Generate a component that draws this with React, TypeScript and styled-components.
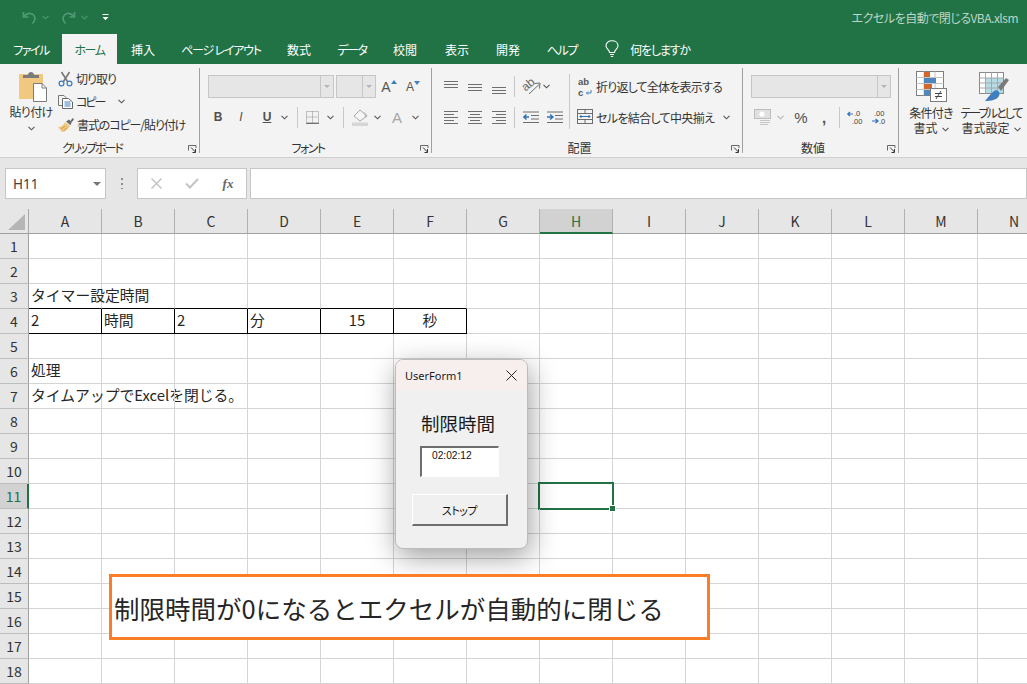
import React from "react";
import styled, { createGlobalStyle } from "styled-components";

const Global = createGlobalStyle`
  html, body { margin: 0; padding: 0; background: #fff; }
  body { font-family: "Noto Sans CJK JP", "Noto Sans", sans-serif; font-feature-settings: "palt"; }
  #root { width: 1027px; height: 684px; overflow: hidden; }
`;

const Page = styled.div`
  position: relative;
  width: 1027px;
  height: 684px;
  overflow: hidden;
  display: flex;
  flex-direction: column;
  color: #262626;
`;

/* ---------- title bar + tabs ---------- */
const TitleBar = styled.div`
  height: 34px;
  background: #217346;
  display: flex;
  align-items: center;
  padding: 0 9px 0 22px;
  flex-shrink: 0;
`;
const QuickAccess = styled.div`
  display: flex;
  align-items: center;
  flex: 1;
`;
const DocTitle = styled.div`
  font-size: 12px;
  color: #bcd6c7;
  letter-spacing: -0.5px;
`;
const TabBar = styled.div`
  height: 30px;
  background: #217346;
  display: flex;
  flex-shrink: 0;
`;
const Tab = styled.div<{ $w: number; $active?: boolean; $ls?: number }>`
  width: ${(p) => p.$w}px;
  flex-shrink: 0;
  font-size: 12px;
  letter-spacing: ${(p) => p.$ls ?? 0}px;
  display: flex;
  align-items: center;
  justify-content: center;
  white-space: nowrap;
  background: ${(p) => (p.$active ? "#f3f3f3" : "transparent")};
  color: ${(p) => (p.$active ? "#217346" : "#fff")};
`;

/* ---------- ribbon ---------- */
const Ribbon = styled.div`
  height: 93px;
  background: #f3f3f3;
  border-bottom: 1px solid #cfcfcf;
  display: flex;
  flex-shrink: 0;
  overflow: hidden;
`;
const Group = styled.div<{ $w: number; $last?: boolean }>`
  position: relative;
  width: ${(p) => p.$w}px;
  flex-shrink: 0;
  display: flex;
  flex-direction: column;
  &::after {
    content: "";
    display: ${(p) => (p.$last ? "none" : "block")};
    position: absolute;
    right: 0;
    top: 4px;
    height: 85px;
    width: 1px;
    background: #a0a0a0;
  }
`;
const GroupBody = styled.div<{ $pl?: number }>`
  flex: 1;
  padding-left: ${(p) => p.$pl ?? 0}px;
  display: flex;
`;
const GroupColumn = styled.div`
  padding-top: 11px;
  display: flex;
  flex-direction: column;
  gap: 8px;
`;
const GroupLabel = styled.div<{ $ls?: number }>`
  height: 20px;
  padding-right: 16px;
  font-size: 12px;
  line-height: 22px;
  letter-spacing: ${(p) => p.$ls ?? 0}px;
  text-align: center;
  color: #333;
`;
const Launcher = styled.svg`
  position: absolute;
  right: 3px;
  bottom: 4px;
`;
const Row = styled.div<{ $h: number; $pl?: number }>`
  height: ${(p) => p.$h}px;
  padding-left: ${(p) => p.$pl ?? 0}px;
  display: flex;
  align-items: center;
`;
const Slot = styled.div<{ $w: number; $ml?: number }>`
  width: ${(p) => p.$w}px;
  margin-left: ${(p) => p.$ml ?? 0}px;
  flex-shrink: 0;
  display: flex;
  align-items: center;
  justify-content: center;
`;
const Sep = styled.div<{ $h?: number; $mt?: number }>`
  width: 1px;
  height: ${(p) => p.$h ?? 21}px;
  margin-top: ${(p) => p.$mt ?? 0}px;
  background: #c8c8c8;
  flex-shrink: 0;
`;
const Combo = styled.div<{ $w: number }>`
  width: ${(p) => p.$w}px;
  height: 23px;
  box-sizing: border-box;
  background: #e6e6e6;
  border: 1px solid #c6c6c6;
  display: flex;
  justify-content: flex-end;
  flex-shrink: 0;
`;
const ComboArrow = styled.div`
  width: 12px;
  border-left: 1px solid #c6c6c6;
  display: flex;
  align-items: center;
  justify-content: center;
  &::before {
    content: "";
    border-left: 3px solid transparent;
    border-right: 3px solid transparent;
    border-top: 3px solid #b4b4b4;
  }
`;
const RibbonText = styled.span<{ $ml?: number; $ls?: number }>`
  font-size: 12px;
  white-space: nowrap;
  margin-left: ${(p) => p.$ml ?? 0}px;
  letter-spacing: ${(p) => p.$ls ?? 0}px;
  color: #333;
`;
const FontButton = styled.span<{ $b?: boolean; $i?: boolean; $u?: boolean; $muted?: boolean; $size?: number }>`
  font-family: "Liberation Sans", sans-serif;
  font-size: ${(p) => p.$size ?? 12}px;
  line-height: 1;
  font-weight: ${(p) => (p.$b || p.$u ? 700 : 400)};
  font-style: ${(p) => (p.$i ? "italic" : "normal")};
  text-decoration: ${(p) => (p.$u ? "underline" : "none")};
  color: ${(p) => (p.$muted ? "#a6a6a6" : "#505050")};
`;
const PasteButton = styled.div`
  width: 42px;
  margin-left: 10px;
  flex-shrink: 0;
  padding-top: 7px;
  display: flex;
  flex-direction: column;
  align-items: center;
`;
const PasteText = styled.div`
  font-size: 12px;
  line-height: 14px;
  margin-top: 3px;
  letter-spacing: -0.7px;
  white-space: nowrap;
  color: #333;
`;
const PasteChevron = styled.div`
  margin-top: 5px;
  line-height: 0;
`;
const ClipColumn = styled.div`
  margin-left: 6px;
  padding-top: 3px;
  display: flex;
  flex-direction: column;
`;
const ClipRow = styled.div`
  height: 23px;
  display: flex;
  align-items: center;
`;
const BigButton = styled.div<{ $w: number; $ml?: number }>`
  width: ${(p) => p.$w}px;
  margin-left: ${(p) => p.$ml ?? 0}px;
  flex-shrink: 0;
  padding-top: 7px;
  display: flex;
  flex-direction: column;
  align-items: center;
`;
const BigText = styled.div<{ $ls?: number }>`
  font-size: 12px;
  line-height: 15px;
  height: 15px;
  letter-spacing: ${(p) => p.$ls ?? 0}px;
  text-align: center;
  white-space: nowrap;
  color: #333;
  &:first-of-type { margin-top: 3px; }
  svg { margin-left: 4px; vertical-align: 1px; }
`;

/* ---------- formula bar ---------- */
const FormulaBar = styled.div`
  height: 51px;
  background: #e6e6e6;
  padding: 10px 0 0 5px;
  box-sizing: border-box;
  display: flex;
  flex-shrink: 0;
`;
const BarBox = styled.div<{ $w?: number; $ml: number }>`
  ${(p) => (p.$w ? `width:${p.$w}px; flex-shrink:0;` : "flex:1;")}
  margin-left: ${(p) => p.$ml}px;
  height: 31px;
  box-sizing: border-box;
  background: #fff;
  border: 1px solid #c6c6c6;
  display: flex;
  align-items: center;
`;
const NameText = styled.div`
  font-size: 13.5px;
  color: #404040;
  margin-left: 7px;
  flex: 1;
  font-family: "Noto Sans", sans-serif;
`;
const NameArrow = styled.div`
  margin-right: 4px;
  border-left: 4px solid transparent;
  border-right: 4px solid transparent;
  border-top: 4px solid #777;
`;
const Grip = styled.div`
  width: 2px;
  height: 11px;
  margin: 10px 0 0 15px;
  background: repeating-linear-gradient(#8e8e8e 0 2px, transparent 2px 5px);
  flex-shrink: 0;
`;
const FxText = styled.span`
  font-family: "Liberation Serif", serif;
  font-style: italic;
  font-weight: 700;
  font-size: 13px;
  color: #666;
`;

/* ---------- sheet ---------- */
const Sheet = styled.div`
  display: grid;
  grid-template-columns: 29px repeat(14, 73px);
  grid-auto-rows: 25px;
  background: #fff;
`;
const Corner = styled.div`
  background: #e6e6e6;
  border-right: 1px solid #a8a8a8;
  border-bottom: 1px solid #a0a0a0;
  box-sizing: border-box;
  display: flex;
  align-items: flex-end;
  justify-content: flex-end;
  padding: 0 3px 3px 0;
`;
const ColHead = styled.div<{ $active?: boolean }>`
  box-sizing: border-box;
  background: ${(p) => (p.$active ? "#d2d2d2" : "#e6e6e6")};
  border-right: 1px solid #b0b0b0;
  border-bottom: ${(p) => (p.$active ? "2px solid #217346" : "1px solid #a0a0a0")};
  color: ${(p) => (p.$active ? "#217346" : "#333")};
  font-size: 14px;
  display: flex;
  align-items: center;
  justify-content: center;
`;
const RowHead = styled.div<{ $active?: boolean }>`
  box-sizing: border-box;
  background: ${(p) => (p.$active ? "#d2d2d2" : "#e6e6e6")};
  border-right: ${(p) => (p.$active ? "2px solid #217346" : "1px solid #a0a0a0")};
  border-bottom: 1px solid #bdbdbd;
  color: ${(p) => (p.$active ? "#217346" : "#333")};
  font-size: 14px;
  display: flex;
  align-items: center;
  justify-content: center;
`;
const Cell = styled.div<{ $black?: "bottom" | "both"; $center?: boolean; $selected?: boolean }>`
  position: relative;
  box-sizing: border-box;
  border-right: 1px solid ${(p) => (p.$black === "both" ? "#000" : "#d4d4d4")};
  border-bottom: 1px solid ${(p) => (p.$black ? "#000" : "#d4d4d4")};
  padding: 0 2px;
  font-size: 14.8px;
  line-height: 22px;
  color: #262626;
  white-space: nowrap;
  font-feature-settings: normal;
  text-align: ${(p) => (p.$center ? "center" : "left")};
  ${(p) =>
    p.$selected
      ? `&::after { content: ""; position: absolute; left: -2px; top: -2px; right: -2px; bottom: -2px; border: 2px solid #217346; }
         &::before { content: ""; position: absolute; right: -3px; bottom: -3px; width: 5px; height: 5px; background: #217346; border: 1px solid #fff; z-index: 1; box-sizing: content-box; margin: -1px; }`
      : ""}
`;

/* ---------- dialog ---------- */
const Dialog = styled.div`
  position: absolute;
  left: 395px;
  top: 359px;
  width: 133px;
  height: 190px;
  box-sizing: border-box;
  background: #f0f0f0;
  border: 1px solid #bcbcbc;
  border-radius: 8px;
  box-shadow: 2px 8px 28px rgba(0, 0, 0, 0.38);
  overflow: hidden;
  display: flex;
  flex-direction: column;
`;
const DialogTitle = styled.div`
  height: 30px;
  background: #f7efee;
  display: flex;
  align-items: center;
  justify-content: space-between;
  padding: 0 10px 0 9px;
  font-family: "Noto Sans", sans-serif;
  font-size: 11px;
  color: #1a1a1a;
`;
const DialogBody = styled.div`
  display: flex;
  flex-direction: column;
  padding: 20px 0 0 16px;
`;
const DialogHeading = styled.div`
  margin-left: 9px;
  font-size: 18.5px;
  line-height: 26px;
  font-weight: 400;
  color: #1a1a1a;
  font-feature-settings: normal;
  white-space: nowrap;
`;
const TimerBox = styled.div`
  margin: 10px 0 0 8px;
  width: 79px;
  height: 31px;
  box-sizing: border-box;
  background: #fff;
  border: 1px solid;
  border-width: 2px 1px 1px 2px;
  border-color: #6e6e6e #fff #fff #6e6e6e;
  padding: 1px 0 0 10px;
  font-family: "Liberation Sans", sans-serif;
  font-size: 10.2px;
  line-height: 13px;
  color: #111;
`;
const StopButton = styled.div`
  margin-top: 17px;
  width: 96px;
  height: 32px;
  box-sizing: border-box;
  background: #f0f0f0;
  border: 1px solid;
  border-width: 1px 2px 2px 1px;
  border-color: #fff #6e6e6e #6e6e6e #fff;
  font-size: 11px;
  letter-spacing: -0.5px;
  display: flex;
  align-items: center;
  justify-content: center;
  color: #111;
`;

/* ---------- callout ---------- */
const Callout = styled.div`
  position: absolute;
  left: 109px;
  top: 574px;
  width: 601px;
  height: 66px;
  box-sizing: border-box;
  background: #fff;
  border: 3px solid #fb7d26;
  padding-left: 2px;
  display: flex;
  align-items: center;
  font-size: 25.5px;
  font-feature-settings: normal;
  color: #262626;
  white-space: nowrap;
`;

/* ---------- icons ---------- */
const Chevron = ({ color = "#555" }: { color?: string }) => (
  <svg width="7" height="5" viewBox="0 0 7 5">
    <path d="M0.5 0.8 L3.5 3.8 L6.5 0.8" fill="none" stroke={color} strokeWidth="1.1" />
  </svg>
);
const Lines = ({ rows, w = 16, h = 16, color = "#6e6e6e" }: { rows: number[][]; w?: number; h?: number; color?: string }) => (
  <svg width={w} height={h} viewBox={`0 0 ${w} ${h}`}>
    {rows.map((r, i) => (
      <rect key={i} x={r[0]} y={r[2]} width={r[1] - r[0]} height="1" fill={color} />
    ))}
  </svg>
);
const LauncherIcon = () => (
  <Launcher width="9" height="8" viewBox="0 0 9 8">
    <path d="M0.5 5.5 V0.5 H8 V3" fill="none" stroke="#666" />
    <path d="M3 2.5 L7.5 7 M7.5 4 V7.5 H4.5" fill="none" stroke="#333" />
  </Launcher>
);
const Undo = () => (
  <svg width="15" height="15" viewBox="0 0 15 15" fill="none" stroke="#4f9a74" strokeWidth="1.7">
    <path d="M1.5 2 V7 H6.5" />
    <path d="M1.8 6.8 C4 3.2 8.8 2.4 11.5 5 C14 7.6 13 11 10.3 13.5" />
  </svg>
);
const Redo = () => (
  <svg width="15" height="15" viewBox="0 0 15 15" fill="none" stroke="#4f9a74" strokeWidth="1.7">
    <path d="M13.5 2 V7 H8.5" />
    <path d="M13.2 6.8 C11 3.2 6.2 2.4 3.5 5 C1 7.6 2 11 4.7 13.5" />
  </svg>
);
const QatMenu = () => (
  <svg width="7" height="7" viewBox="0 0 7 7" fill="#fff">
    <rect x="0.5" y="0" width="6" height="1" />
    <path d="M0.5 3 H6.5 L3.5 6.2 Z" />
  </svg>
);
const Bulb = () => (
  <svg width="14" height="18" viewBox="0 0 14 18" fill="none" stroke="#fff" strokeWidth="1.1">
    <path d="M4.5 12.5 C4.5 10 1 8.8 1 5.8 C1 2.8 3.6 0.8 7 0.8 C10.4 0.8 13 2.8 13 5.8 C13 8.8 9.5 10 9.5 12.5 Z" />
    <path d="M5 14.5 H9 M5.8 16.5 H8.2" />
  </svg>
);
const PasteIcon = () => (
  <svg width="30" height="31" viewBox="0 0 30 31">
    <rect x="1" y="3" width="24" height="25" rx="1" fill="#f1c87f" />
    <path d="M5 7 V4 H10 C10 2 11.5 1 13 1 C14.5 1 16 2 16 4 H21 V7 Z" fill="#7b7b7b" />
    <path d="M15.5 12.5 H24 L28.5 17 V30.5 H15.5 Z" fill="#fff" stroke="#7b7b7b" />
    <path d="M24 12.5 V17 H28.5" fill="none" stroke="#7b7b7b" />
  </svg>
);
const CutIcon = () => (
  <svg width="15" height="16" viewBox="0 0 15 16" fill="none">
    <path d="M3.5 1 L9.5 10.5 M11.5 1 L5.5 10.5" stroke="#777" strokeWidth="1.6" />
    <circle cx="3.5" cy="12.5" r="2.4" stroke="#3f7fc0" strokeWidth="1.3" />
    <circle cx="11.5" cy="12.5" r="2.4" stroke="#3f7fc0" strokeWidth="1.3" />
  </svg>
);
const CopyIcon = () => (
  <svg width="15" height="14" viewBox="0 0 15 14" fill="none">
    <path d="M4 10.5 H0.5 V0.5 H6 L8 2.5 V3.5" stroke="#777" />
    <path d="M4.5 3.5 H10.5 L14.5 7 V13.5 H4.5 Z" fill="#fff" stroke="#666" />
    <path d="M6.5 7 H12.5 M6.5 9 H12.5 M6.5 11 H12.5" stroke="#3f7fc0" />
  </svg>
);
const PainterIcon = () => (
  <svg width="16" height="14" viewBox="0 0 16 14">
    <path d="M0 9 C3 9 6 7 7 4 L12 8 C10 11 7 14 4 14 Z" fill="#f1c87f" />
    <path d="M3 11 L7 8 M5.5 13 L9 9.5" stroke="#c9a050" />
    <path d="M8 3.5 L11 1.5 L12.5 3 L14.5 0 L16 1.5 L13.5 4.5 L12.5 7.2 Z" fill="#6b6b6b" />
  </svg>
);
const BorderIcon = () => (
  <svg width="13" height="13" viewBox="0 0 13 13" fill="none" stroke="#8d8d8d" strokeDasharray="1 1">
    <rect x="0.5" y="0.5" width="12" height="11" />
    <path d="M6.5 0.5 V11.5 M0.5 6 H12.5" />
    <path d="M0 12.5 H13" strokeDasharray="none" stroke="#707070" />
  </svg>
);
const FillIcon = () => (
  <svg width="17" height="17" viewBox="0 0 17 17">
    <path d="M8 1 L15 7 L8 12 L2 7 Z" fill="#f6f6f6" stroke="#a9a9a9" />
    <path d="M12 2.5 L15.5 7 L13 9 Z" fill="#b8b8b8" />
    <rect x="0" y="13.5" width="16" height="3.5" fill="#d6d6d6" />
  </svg>
);
const OrientIcon = () => (
  <svg width="18" height="18" viewBox="0 0 18 18" fill="none" overflow="visible">
    <text x="0" y="11" transform="rotate(-40 5 9)" fontFamily="Liberation Sans" fontSize="12" fill="#666">ab</text>
    <path d="M6 16 L16 6.5 M11.5 5.5 L17 5 L16.5 10.5" stroke="#6b6b6b" />
  </svg>
);
const WrapIcon = () => (
  <svg width="15" height="20" viewBox="0 0 15 20" overflow="visible">
    <text x="0" y="8" fontFamily="Liberation Sans" fontSize="9.5" fontWeight="700" fill="#555">ab</text>
    <text x="0" y="18.5" fontFamily="Liberation Sans" fontSize="9.5" fontWeight="700" fill="#555">c</text>
    <path d="M13 13 V16 H8.5 M10 14.5 L8.5 16 L10 17.5" fill="none" stroke="#3f7fc0" />
  </svg>
);
const IndentIcon = ({ flip }: { flip?: boolean }) => (
  <svg width="17" height="13" viewBox="0 0 17 13">
    <path d="M0 1 H16 M8 4.5 H16 M8 8 H16 M0 11.5 H16" stroke="#6e6e6e" />
    {flip ? (
      <path d="M0 6 H5 M3 3.5 L6 6 L3 8.5" stroke="#2d6fb5" strokeWidth="1.4" fill="none" />
    ) : (
      <path d="M6 6 H1 M3.5 3.5 L0.8 6 L3.5 8.5" stroke="#2d6fb5" strokeWidth="1.4" fill="none" />
    )}
  </svg>
);
const MergeIcon = () => (
  <svg width="16" height="16" viewBox="0 0 16 16" fill="none">
    <rect x="0.5" y="0.5" width="15" height="14" stroke="#6e6e6e" />
    <path d="M0.5 4.5 H15.5 M0.5 10.5 H15.5 M8 0.5 V4.5 M8 10.5 V14.5" stroke="#6e6e6e" />
    <path d="M3 7.5 H13 M4.5 6 L3 7.5 L4.5 9 M11.5 6 L13 7.5 L11.5 9" stroke="#2d6fb5" />
  </svg>
);
const MoneyIcon = () => (
  <svg width="17" height="16" viewBox="0 0 17 16">
    <rect x="0.5" y="0.5" width="16" height="9" fill="#e0e0e0" stroke="#bdbdbd" />
    <circle cx="8" cy="5" r="2.6" fill="#fff" />
    <path d="M6 11.5 H16 M6 13.5 H16 M6 15.5 H14" stroke="#c6c6c6" />
  </svg>
);
const DecimalIcon = ({ more }: { more?: boolean }) => (
  <svg width="18" height="15" viewBox="0 0 18 15" overflow="visible">
    <text x={more ? 3 : 7} y="6" fontFamily="Liberation Sans" fontSize="7.5" fill="#444">{more ? ".00" : ".0"}</text>
    <text x={more ? 8 : 5} y="14" fontFamily="Liberation Sans" fontSize="7.5" fill="#444">{more ? ".0" : ".00"}</text>
    {more ? (
      <path d="M1 11 H6 M4.5 9 L7 11 L4.5 13" stroke="#2d6fb5" strokeWidth="1.2" fill="none" />
    ) : (
      <path d="M6 4 H1 M3 2 L0.8 4 L3 6" stroke="#2d6fb5" strokeWidth="1.2" fill="none" />
    )}
  </svg>
);
const CondFormatIcon = () => (
  <svg width="31" height="31" viewBox="0 0 31 31">
    <rect x="0.5" y="0.5" width="27" height="24" fill="#fff" stroke="#7d7d7d" />
    <path d="M8 0.5 V24.5 M19 0.5 V24.5 M0.5 6.5 H27.5 M0.5 12.5 H27.5 M0.5 18.5 H27.5" stroke="#c4c4c4" />
    <rect x="8" y="1" width="6" height="5" fill="#d2672c" />
    <rect x="8" y="7" width="12" height="5" fill="#4f86bf" />
    <rect x="8" y="13" width="8" height="5" fill="#d2672c" />
    <rect x="8" y="19" width="6" height="5.5" fill="#4f86bf" />
    <rect x="14.5" y="17.5" width="16" height="13" fill="#fff" stroke="#7d7d7d" />
    <path d="M19 22.5 H26 M19 25.5 H26 M25 20 L20 28" stroke="#444" fill="none" />
  </svg>
);
const TableFormatIcon = () => (
  <svg width="35" height="31" viewBox="0 0 35 31">
    <g transform="translate(5 1)">
      <rect x="0.5" y="0.5" width="24" height="21" fill="#fff" stroke="#8a8a8a" />
      <rect x="6" y="6" width="18" height="15" fill="#b5dbe4" />
      <path d="M6.5 0.5 V21.5 M12.5 0.5 V21.5 M18.5 0.5 V21.5 M0.5 6 H24.5 M0.5 11 H24.5 M0.5 16 H24.5" stroke="#a8a8a8" />
      <path d="M19 15 L27 6 L30 8 L22 19 Z" fill="#7a7a7a" />
      <path d="M6 29 C9 26 11 22 15 19 C18 17 22 20 20 24 C18 28 12 29 6 29 Z" fill="#3f7fc0" />
    </g>
  </svg>
);
const TriUp = () => (
  <svg width="6" height="4" viewBox="0 0 6 4"><path d="M0 4 L3 0 L6 4 Z" fill="#3f7fc0" /></svg>
);
const TriDown = () => (
  <svg width="6" height="4" viewBox="0 0 6 4"><path d="M0 0 L3 4 L6 0 Z" fill="#3f7fc0" /></svg>
);
const GrowFont = styled.div<{ $size: number }>`
  display: flex;
  align-items: flex-start;
  font-family: "Liberation Sans", sans-serif;
  font-size: ${(p) => p.$size}px;
  line-height: 1;
  color: #555;
`;

const CornerMark = () => (
  <svg width="17" height="16" viewBox="0 0 17 16"><path d="M17 0 V16 H0 Z" fill="#b6b6b6" /></svg>
);

/* ---------- data ---------- */
const tabs: { t: string; w: number; ls?: number; active?: boolean }[] = [
  { t: "ファイル", w: 62, ls: -1.5 },
  { t: "ホーム", w: 55, ls: -1.5, active: true },
  { t: "挿入", w: 52 },
  { t: "ページ レイアウト", w: 104, ls: -1.2 },
  { t: "数式", w: 52 },
  { t: "データ", w: 54, ls: -1.5 },
  { t: "校閲", w: 52 },
  { t: "表示", w: 52 },
  { t: "開発", w: 50 },
  { t: "ヘルプ", w: 58, ls: -1.3 },
];
const cols = "ABCDEFGHIJKLMN".split("");
const rows = Array.from({ length: 18 }, (_, i) => i + 1);
const texts: Record<string, string> = {
  A3: "タイマー設定時間",
  A4: "2",
  B4: "時間",
  C4: "2",
  D4: "分",
  E4: "15",
  F4: "秒",
  A6: "処理",
  A7: "タイムアップでExcelを閉じる。",
};
const boxed = "ABCDEF";

export default function App() {
  return (
    <Page>
      <Global />
      <TitleBar>
        <QuickAccess>
          <Undo />
          <Slot $w={9} $ml={4}><Chevron color="#4f9a74" /></Slot>
          <Slot $w={15} $ml={11}><Redo /></Slot>
          <Slot $w={9} $ml={4}><Chevron color="#4f9a74" /></Slot>
          <Slot $w={7} $ml={13}><QatMenu /></Slot>
        </QuickAccess>
        <DocTitle>エクセルを自動で閉じるVBA.xlsm</DocTitle>
      </TitleBar>
      <TabBar>
        {tabs.map((tab) => (
          <Tab key={tab.t} $w={tab.w} $ls={tab.ls} $active={tab.active}>{tab.t}</Tab>
        ))}
        <Slot $w={18} $ml={12}><Bulb /></Slot>
        <Tab $w={78} $ls={-1.2}>何をしますか</Tab>
      </TabBar>

      <Ribbon>
        <Group $w={200}>
          <GroupBody>
            <PasteButton>
              <Slot $w={30} $ml={4}><PasteIcon /></Slot>
              <PasteText>貼り付け</PasteText>
              <PasteChevron><Chevron /></PasteChevron>
            </PasteButton>
            <ClipColumn>
              <ClipRow><CutIcon /><RibbonText $ml={3} $ls={-1}>切り取り</RibbonText></ClipRow>
              <ClipRow><CopyIcon /><RibbonText $ml={3} $ls={-2}>コピー</RibbonText><Slot $w={10} $ml={12}><Chevron /></Slot></ClipRow>
              <ClipRow><PainterIcon /><RibbonText $ml={3} $ls={-1.1}>書式のコピー/貼り付け</RibbonText></ClipRow>
            </ClipColumn>
          </GroupBody>
          <GroupLabel $ls={-2}>クリップボード</GroupLabel>
          <LauncherIcon />
        </Group>

        <Group $w={232}>
          <GroupBody $pl={8}>
            <GroupColumn>
              <Row $h={23}>
                <Combo $w={126}><ComboArrow /></Combo>
                <Slot $w={40} $ml={2}><Combo $w={40}><ComboArrow /></Combo></Slot>
                <Slot $w={24} $ml={1}><GrowFont $size={14}>A<TriUp /></GrowFont></Slot>
                <Slot $w={24}><GrowFont $size={12}>A<TriDown /></GrowFont></Slot>
              </Row>
              <Row $h={22}>
                <Slot $w={20}><FontButton $b>B</FontButton></Slot>
                <Slot $w={26}><FontButton $i>I</FontButton></Slot>
                <Slot $w={26}><FontButton $u>U</FontButton></Slot>
                <Slot $w={9}><Chevron /></Slot>
                <Slot $w={16}><Sep /></Slot>
                <Slot $w={14}><BorderIcon /></Slot>
                <Slot $w={22}><Chevron /></Slot>
                <Slot $w={4}><Sep /></Slot>
                <Slot $w={26} $ml={2}><FillIcon /></Slot>
                <Slot $w={8}><Chevron /></Slot>
                <Slot $w={28} $ml={2}><FontButton $muted $size={15}>A</FontButton></Slot>
                <Slot $w={8}><Chevron /></Slot>
              </Row>
            </GroupColumn>
          </GroupBody>
          <GroupLabel $ls={-1.5}>フォント</GroupLabel>
          <LauncherIcon />
        </Group>

        <Group $w={311}>
          <GroupBody $pl={12}>
            <GroupColumn>
              <Row $h={23}>
                <Slot $w={14}><Lines w={14} h={18} rows={[[0, 14, 3], [0, 14, 6], [0, 14, 9]]} /></Slot>
                <Slot $w={14} $ml={10}><Lines w={14} h={18} rows={[[0, 14, 6], [0, 14, 9], [0, 14, 12]]} /></Slot>
                <Slot $w={14} $ml={10}><Lines w={14} h={18} rows={[[0, 14, 9], [0, 14, 12], [0, 14, 15]]} /></Slot>
                <Slot $w={17}><Sep /></Slot>
                <Slot $w={18}><OrientIcon /></Slot>
                <Slot $w={9} $ml={1}><Chevron /></Slot>
                <Slot $w={18} $ml={9}><Sep $h={32} $mt={7} /></Slot>
                <Slot $w={15}><WrapIcon /></Slot>
                <RibbonText $ml={3} $ls={-0.8}>折り返して全体を表示する</RibbonText>
              </Row>
              <Row $h={22}>
                <Slot $w={14}><Lines w={14} h={14} rows={[[0, 14, 1], [0, 10, 4], [0, 14, 7], [0, 10, 10], [0, 14, 13]]} /></Slot>
                <Slot $w={14} $ml={10}><Lines w={14} h={14} rows={[[0, 14, 1], [2, 12, 4], [0, 14, 7], [2, 12, 10], [0, 14, 13]]} /></Slot>
                <Slot $w={14} $ml={10}><Lines w={14} h={14} rows={[[0, 14, 1], [4, 14, 4], [0, 14, 7], [4, 14, 10], [0, 14, 13]]} /></Slot>
                <Slot $w={17}><Sep /></Slot>
                <Slot $w={17}><IndentIcon /></Slot>
                <Slot $w={17} $ml={7}><IndentIcon flip /></Slot>
                <Slot $w={10}><Sep $h={23} /></Slot>
                <Slot $w={16} $ml={3}><MergeIcon /></Slot>
                <RibbonText $ml={3} $ls={-0.65}>セルを結合して中央揃え</RibbonText>
                <Slot $w={9} $ml={8}><Chevron /></Slot>
              </Row>
            </GroupColumn>
          </GroupBody>
          <GroupLabel>配置</GroupLabel>
          <LauncherIcon />
        </Group>

        <Group $w={156}>
          <GroupBody $pl={8}>
            <GroupColumn>
              <Row $h={23}>
                <Combo $w={140}><ComboArrow /></Combo>
              </Row>
              <Row $h={22}>
                <Slot $w={17} $ml={3}><MoneyIcon /></Slot>
                <Slot $w={9} $ml={5}><Chevron color="#b4b4b4" /></Slot>
                <Slot $w={22} $ml={5}><FontButton $size={15}>%</FontButton></Slot>
                <Slot $w={24}><FontButton $b $size={15}>,</FontButton></Slot>
                <Slot $w={6}><Sep /></Slot>
                <Slot $w={18} $ml={5}><DecimalIcon /></Slot>
                <Slot $w={18} $ml={6}><DecimalIcon more /></Slot>
              </Row>
            </GroupColumn>
          </GroupBody>
          <GroupLabel>数値</GroupLabel>
          <LauncherIcon />
        </Group>

        <Group $w={128} $last>
          <GroupBody>
            <BigButton $w={64}>
              <CondFormatIcon />
              <BigText $ls={-0.7}>条件付き</BigText>
              <BigText>書式<Chevron /></BigText>
            </BigButton>
            <BigButton $w={66} $ml={-5}>
              <TableFormatIcon />
              <BigText $ls={-2}>テーブルとして</BigText>
              <BigText>書式設定<Chevron /></BigText>
            </BigButton>
          </GroupBody>
        </Group>
      </Ribbon>

      <FormulaBar>
        <BarBox $w={101} $ml={0}>
          <NameText>H11</NameText>
          <NameArrow />
        </BarBox>
        <Grip />
        <BarBox $w={110} $ml={14}>
          <Slot $w={14} $ml={11}>
            <svg width="11" height="11" viewBox="0 0 11 11"><path d="M0.5 0.5 L10.5 10.5 M10.5 0.5 L0.5 10.5" stroke="#c4c4c4" strokeWidth="1.5" /></svg>
          </Slot>
          <Slot $w={14} $ml={22}>
            <svg width="14" height="11" viewBox="0 0 14 11"><path d="M1 5.5 L5 9.5 L13 1" stroke="#c4c4c4" strokeWidth="2" fill="none" /></svg>
          </Slot>
          <Slot $w={18} $ml={20}><FxText>fx</FxText></Slot>
        </BarBox>
        <BarBox $ml={3} />
      </FormulaBar>

      <Sheet>
        <Corner><CornerMark /></Corner>
        {cols.map((c) => (
          <ColHead key={c} $active={c === "H"}>{c}</ColHead>
        ))}
        {rows.map((r) => (
          <React.Fragment key={r}>
            <RowHead $active={r === 11}>{r}</RowHead>
            {cols.map((c) => {
              const inBox = boxed.includes(c);
              return (
                <Cell
                  key={c}
                  $black={inBox && r === 4 ? "both" : inBox && r === 3 ? "bottom" : undefined}
                  $center={r === 4 && (c === "E" || c === "F")}
                  $selected={c === "H" && r === 11}
                >
                  {texts[c + r]}
                </Cell>
              );
            })}
          </React.Fragment>
        ))}
      </Sheet>

      <Dialog>
        <DialogTitle>
          UserForm1
          <svg width="11" height="11" viewBox="0 0 11 11"><path d="M0.5 0.5 L10.5 10.5 M10.5 0.5 L0.5 10.5" stroke="#222" strokeWidth="1" /></svg>
        </DialogTitle>
        <DialogBody>
          <DialogHeading>制限時間</DialogHeading>
          <TimerBox>02:02:12</TimerBox>
          <StopButton>ストップ</StopButton>
        </DialogBody>
      </Dialog>

      <Callout>制限時間が0になるとエクセルが自動的に閉じる</Callout>
    </Page>
  );
}
